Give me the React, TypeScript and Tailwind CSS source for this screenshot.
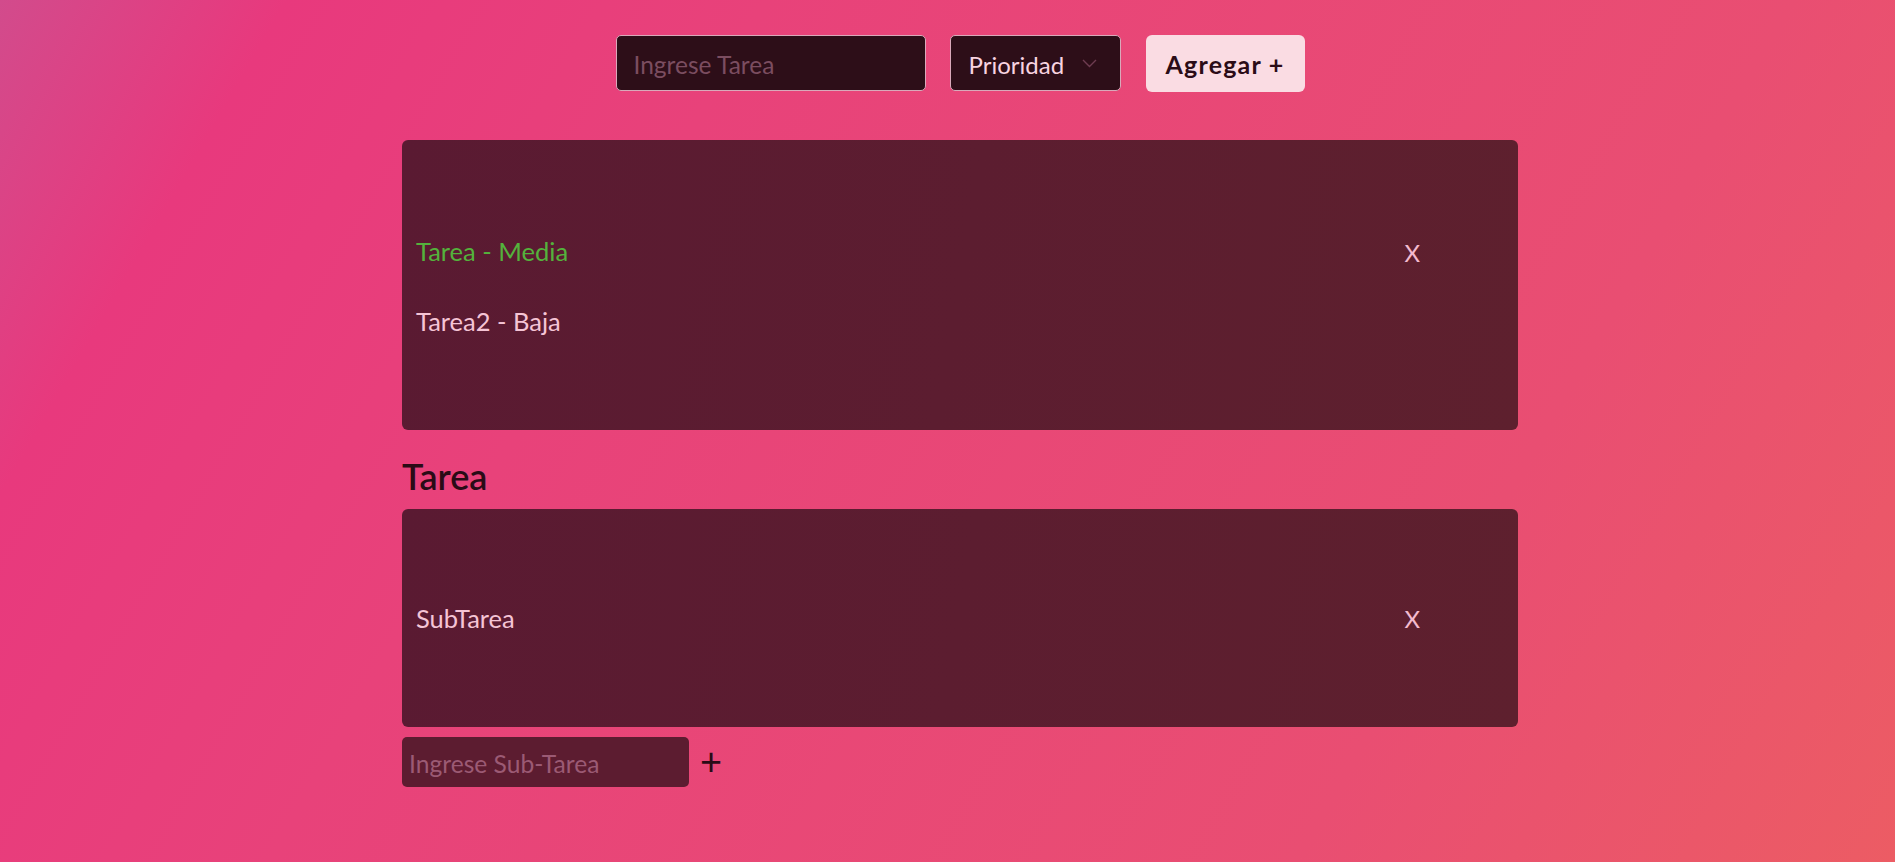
import React from "react";

export default function App() {
  return (
    <div
      className="min-h-[862px] w-full bg-[linear-gradient(120deg,#d24b8c_0%,#e8397d_12%,#e8427a_32%,#e94e72_75%,#ec5c64_100%)]"
      style={{ fontFamily: "Lato, 'Liberation Sans', sans-serif" }}
    >
      <div className="ml-[402px] w-[1116px] pt-[35px]">
        {/* top form */}
        <div className="flex justify-center gap-[24px]">
          <input
            placeholder="Ingrese Tarea"
            className="h-[56px] w-[310px] rounded-[5px] border border-[#d9a9ba] bg-[#2d0e18] pl-[17px] pt-[3px] text-[24.5px] text-[#f6d0de] outline-none placeholder:text-[#7b4d60]"
          />
          <div className="flex h-[56px] w-[171px] items-center justify-between rounded-[5px] border border-[#d9a9ba] bg-[#2d0e18] pl-[18px] pr-[23px] pt-[3px] text-[24px] text-[#f8d3e0]">
            <span>Prioridad</span>
            <svg width="15" height="9" viewBox="0 0 15 9" fill="none" className="-mt-[2px]">
              <path d="M1 1l6.5 6.5L14 1" stroke="#6e3c50" strokeWidth="1.4" />
            </svg>
          </div>
          <button className="ml-px h-[57px] w-[159px] rounded-[6px] bg-[#fadce3] pt-[3px] text-[25px] font-bold tracking-[1.2px] text-[#2b0c17]">
            Agregar +
          </button>
        </div>

        {/* task list card */}
        <div className="mt-[48px] flex h-[290px] flex-col justify-center rounded-[6px] bg-[linear-gradient(100deg,#5a1a32,#5e202e)] pt-[3px] text-[25.5px]">
          <div className="flex h-[70px] items-center justify-between pl-[14px] pr-[98px]">
            <span className="text-[#54b23c]">Tarea - Media</span>
            <span className="pt-[3px] text-[24px] text-[#f3bace]">X</span>
          </div>
          <div className="flex h-[70px] items-center pl-[14px]">
            <span className="text-[#f5c4d5]">Tarea2 - Baja</span>
          </div>
        </div>

        <h2 className="mt-[25px] mb-[12px] text-[36px] font-semibold leading-[42px] text-[#2a0b16]">
          Tarea
        </h2>

        {/* subtask card */}
        <div className="flex h-[218px] flex-col justify-center rounded-[6px] bg-[linear-gradient(100deg,#5a1a32,#5e202e)] text-[25.5px]">
          <div className="flex h-[70px] items-center justify-between pl-[14px] pr-[98px]">
            <span className="text-[#f5c4d5]">SubTarea</span>
            <span className="pt-[2px] text-[24px] text-[#f3bace]">X</span>
          </div>
        </div>

        <div className="mt-[10px] flex items-center gap-[11px]">
          <input
            placeholder="Ingrese Sub-Tarea"
            className="h-[50px] w-[287px] rounded-[5px] bg-[#5c1c30] pl-[7px] pt-[2px] text-[24.6px] text-[#f5c4d5] outline-none placeholder:text-[#9b5a74]"
          />
          <button className="-mt-[4px] text-[38px] font-normal leading-none text-[#2a0b16]">+</button>
        </div>
      </div>
    </div>
  );
}
